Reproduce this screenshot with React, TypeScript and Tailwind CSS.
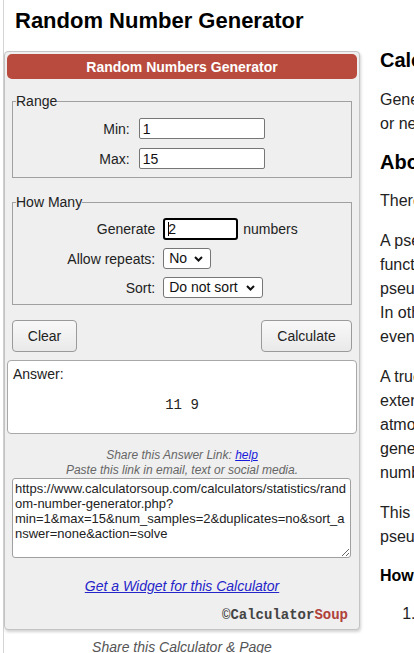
import React from 'react';

const Chevron = () => (
  <svg width="9" height="6" viewBox="0 0 9 6" className="pointer-events-none absolute right-[8px] top-[8px]">
    <polyline points="1,1 4.5,4.5 8,1" fill="none" stroke="#111" strokeWidth="2" />
  </svg>
);

const SelectBox = ({ value, width, options }: { value: string; width: string; options: string[] }) => (
  <div className={`relative ${width}`}>
    <select
      defaultValue={value}
      className="h-[21px] w-full appearance-none rounded-[3px] border border-[#767676] bg-white pl-[5px] text-[14px] leading-[19px] text-[#111]"
    >
      {options.map((o) => (
        <option key={o}>{o}</option>
      ))}
    </select>
    <Chevron />
  </div>
);

const TextLine = ({ children }: { children: React.ReactNode }) => (
  <div className="whitespace-nowrap">{children}</div>
);

export default function App() {
  const link =
    'https://www.calculatorsoup.com/calculators/statistics/random-number-generator.php?min=1&max=15&num_samples=2&duplicates=no&sort_answer=none&action=solve';

  return (
    <div className="h-[653px] w-[414px] overflow-hidden bg-white font-['Liberation_Sans',Arial,sans-serif] text-black">
      <div className="ml-[3px] border-l border-[#d4d4d4]">
        {/* Page title */}
        <h1 className="h-[50px] pl-[11px] pt-[8px] text-[22px] font-bold leading-[26px]">Random Number Generator</h1>

        <div className="flex items-start">
          {/* Calculator panel */}
          <div className="mt-[1px] w-[356px] shrink-0 rounded-[4px] border border-[#c4c4c4] bg-[#efefef] px-[2px] pb-[6px] pt-[2px] text-[14px] leading-[16px] text-[#222] shadow-[1px_2px_3px_rgba(0,0,0,0.18)]">
            <div className="flex h-[25px] items-center justify-center rounded-[5px] bg-[#b84b3d] text-[14px] font-bold text-white">
              Random Numbers Generator
            </div>

            {/* Range */}
            <fieldset className="mx-[5px] mt-[14px] border border-[#a0a0a0] px-[3px] pb-[8px] pt-[9px]">
              <legend className="leading-[16px]">Range</legend>
              <div className="flex justify-center">
                <div className="grid grid-cols-[auto_126px] items-center gap-x-[9px] gap-y-[9px]">
                  <span className="text-right">Min:</span>
                  <input
                    readOnly
                    value="1"
                    className="h-[21px] w-full rounded-[2px] border border-[#767676] bg-white px-[3px] text-[14px] text-[#111]"
                  />
                  <span className="text-right">Max:</span>
                  <input
                    readOnly
                    value="15"
                    className="h-[21px] w-full rounded-[2px] border border-[#767676] bg-white px-[3px] text-[14px] text-[#111]"
                  />
                </div>
              </div>
            </fieldset>

            {/* How Many */}
            <fieldset className="mx-[5px] mt-[16px] border border-[#a0a0a0] px-[3px] pb-[6px] pt-[8px]">
              <legend className="leading-[16px]">How Many</legend>
              <div className="flex justify-center">
                <div className="grid grid-cols-[auto_auto] items-center gap-x-[8px] gap-y-[8px] pl-[1px]">
                  <span className="text-right">Generate</span>
                  <div className="flex items-center gap-[5px]">
                    <div className="relative h-[22px] w-[75px] rounded-[3px] border-2 border-black bg-white pl-[3px] leading-[18px] text-[#111]">
                      <span className="absolute left-[3px] top-[2px] h-[14px] w-px bg-black" />
                      2
                    </div>
                    <span>numbers</span>
                  </div>
                  <span className="text-right">Allow repeats:</span>
                  <SelectBox value="No" width="w-[48px]" options={['No', 'Yes']} />
                  <span className="text-right">Sort:</span>
                  <SelectBox value="Do not sort" width="w-[100px]" options={['Do not sort', 'Low to High', 'High to Low']} />
                </div>
              </div>
            </fieldset>

            {/* Buttons */}
            <div className="mx-[5px] mt-[15px] flex justify-between">
              <button className="h-[32px] w-[65px] rounded-[4px] border border-[#9a9a9a] bg-gradient-to-b from-[#f8f8f8] to-[#e9e9e9] text-[14px] text-[#222]">
                Clear
              </button>
              <button className="h-[32px] w-[91px] rounded-[4px] border border-[#9a9a9a] bg-gradient-to-b from-[#f8f8f8] to-[#e9e9e9] text-[14px] text-[#222]">
                Calculate
              </button>
            </div>

            {/* Answer */}
            <div className="mt-[8px] h-[74px] rounded-[4px] border border-[#a8a8a8] bg-white px-[5px] pt-[5px]">
              <div>Answer:</div>
              <div className="mt-[15px] text-center font-['Liberation_Mono',monospace] text-[14px] text-[#222]">11 9</div>
            </div>

            <div className="mt-[14px] text-center text-[12px] italic leading-[15px] text-[#666]">
              <div>
                Share this Answer Link:{' '}
                <span className="text-[#1a1adb] underline">help</span>
              </div>
              <div>Paste this link in email, text or social media.</div>
            </div>

            <textarea
              readOnly
              value={link}
              className="mx-[5px] block h-[80px] w-[339px] rounded-[3px] border border-[#a0a0a0] bg-white px-[2px] py-[2px] text-[13px] leading-[15px] text-[#222]"
            />

            <div className="mt-[20px] text-center text-[14px] italic">
              <span className="text-[#2525c9] underline">Get a Widget for this Calculator</span>
            </div>

            <div className="mt-[13px] pr-[9px] text-right font-['Liberation_Mono',monospace] text-[14px] font-bold">
              <span className="font-normal text-[#333]">©</span>
              <span className="text-[#444]">Calculator</span>
              <span className="text-[#b0403a]">Soup</span>
            </div>
          </div>

          {/* Article column */}
          <div className="ml-[20px] shrink-0 text-[16px] leading-[24px] text-[#222]">
            <h2 className="text-[20px] font-bold leading-[20px] text-black">Calculator Use</h2>
            <div className="mt-[18px]">
              <TextLine>Generate one or more random numbers within a range. Numbers can be positive</TextLine>
              <TextLine>or negative whole numbers.</TextLine>
            </div>
            <h2 className="mt-[16px] text-[20px] font-bold leading-[20px] text-black">About Random Numbers</h2>
            <div className="mt-[17px]">
              <TextLine>There are two main types of random number generators.</TextLine>
            </div>
            <div className="mt-[16px]">
              <TextLine>A pseudo-random number generator is an algorithm or</TextLine>
              <TextLine>function that produces a sequence of numbers called</TextLine>
              <TextLine>pseudo-random numbers from an initial seed value.</TextLine>
              <TextLine>In other words, the sequence is determined by the seed,</TextLine>
              <TextLine>even though the numbers appear to be random.</TextLine>
            </div>
            <div className="mt-[16px]">
              <TextLine>A true random number generator uses an</TextLine>
              <TextLine>external physical process such as</TextLine>
              <TextLine>atmospheric noise or radioactive decay to</TextLine>
              <TextLine>generate unpredictable values that are truly random</TextLine>
              <TextLine>numbers.</TextLine>
            </div>
            <div className="mt-[16px]">
              <TextLine>This calculator uses a computer algorithm to generate</TextLine>
              <TextLine>pseudo-random numbers.</TextLine>
            </div>
            <h3 className="mt-[17px] font-bold leading-[20px] text-black">How to Generate Random Numbers</h3>
            <ol className="mt-[16px] list-decimal pl-[40px]">
              <li className="whitespace-nowrap">Enter the lowest number in the range</li>
            </ol>
          </div>
        </div>

        <div className="mt-[9px] w-[356px] text-center text-[14px] italic leading-[16px] text-[#555]">
          Share this Calculator &amp; Page
        </div>
      </div>
    </div>
  );
}
